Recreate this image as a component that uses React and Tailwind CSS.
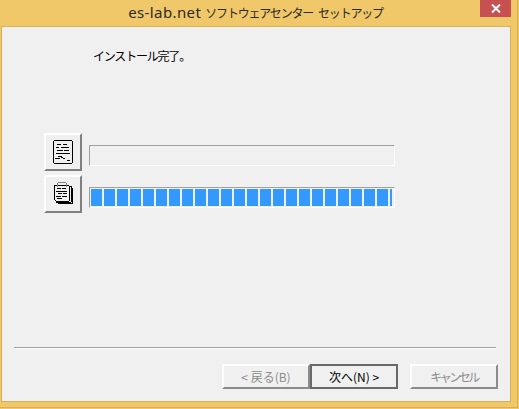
const FONT = { fontFamily: '"Noto Sans CJK JP", "Liberation Sans", sans-serif' };

function DocIcon() {
  return (
    <svg width="20" height="24" viewBox="0 0 20 24" shapeRendering="crispEdges">
      <path d="M1.500.5h17l1 1v21l-1 1h-17l-1-1v-21z" fill="#f0f0f0" stroke="#000" />
      <path d="M4 4.500h4M10 4.500h4M3 7.500h3M8 7.500h8M4 10.500h6M11 10.500h5M3 13.500h14M5 16.500h4M2 18.500h5M8 17.500h2M10 18.500h2M14 20.500h3" stroke="#000" fill="none" />
    </svg>
  );
}

function ClipIcon() {
  return (
    <svg width="21" height="24" viewBox="0 0 21 24" shapeRendering="crispEdges" className="mb-[2px]">
      <path d="M16 5.500h2.500v15M19.500 7v15M3 21.500h15M5 22.500h15" stroke="#000" fill="none" />
      <path d="M1.500 4.500h14l1 1v14l-1 1h-12l-2-2z" fill="#f0f0f0" stroke="#000" />
      <path d="M4.500 6v-3l1-2h7l1 2v3" stroke="#808080" fill="none" />
      <path d="M4 7.500h4M9 7.500h4M3 10.500h11M5 12.500h4M10 12.500h4M3 15.500h5M9 15.500h5M4 17.500h5" stroke="#000" fill="none" />
    </svg>
  );
}

function IconButton({ children }) {
  return (
    <div className="w-[38px] h-[38px] shrink-0 flex items-center justify-center bg-[#f0f0f0] border-2 border-t-[#fff] border-l-[#fff] border-r-[#808080] border-b-[#808080]">
      {children}
    </div>
  );
}

function Progress({ children }) {
  return (
    <div className="mt-[12px] w-[306px] h-[21px] flex gap-[2px] p-[1px] border border-t-[#a0a0a0] border-l-[#a0a0a0] border-r-[#fff] border-b-[#fff] overflow-hidden">
      {children}
    </div>
  );
}

function WinButton({ children, primary, className = "" }) {
  const cls = primary
    ? "border-2 border-[#696969] text-black"
    : "border-2 border-t-[#fff] border-l-[#fff] border-r-[#8c8c8c] border-b-[#8c8c8c] text-[#8c8c8c]";
  return (
    <div className={`w-[88px] h-[25px] flex items-center justify-center text-[12px] leading-none bg-[#f0f0f0] ${cls} ${className}`}>
      {children}
    </div>
  );
}

const SEGMENTS = Array.from({ length: 23 });

export default function App() {
  return (
    <div style={FONT} className="w-[519px] h-[409px] bg-[#f0c769] overflow-hidden">
      <div className="w-[518px] h-[408px] flex flex-col border-r border-b border-[#d8b054]">
        {/* title bar */}
        <div className="h-[26px] shrink-0 flex">
          <div className="flex-1 pl-[31px] flex justify-center items-baseline whitespace-pre pt-[2px] leading-[20px] text-[#2b2b2b]">
            <span className="text-[15px] tracking-[0.4px] mr-[4px]" style={{ fontFamily: '"Noto Sans", sans-serif' }}>es-lab.net</span>
            <span className="text-[12px] tracking-[-1.2px] mr-[5px]">ソフトウェアセンター</span>
            <span className="text-[12px] tracking-[-1.2px]">セットアップ</span>
          </div>
          <div className="w-[31px] h-[17px] mr-[6px] bg-[#c75050] flex items-center justify-center">
            <svg width="10" height="9" viewBox="0 0 10 9">
              <path d="M1 .5l8 8M9 .5l-8 8" stroke="#fff" strokeWidth="2" />
            </svg>
          </div>
        </div>

        {/* client area */}
        <div className="ml-[1px] w-[510px] h-[376px] border border-[#d8b054] bg-[#f0f0f0] flex flex-col">
          <div className="pl-[91px] pt-[20px] text-[12px] leading-[18px] tracking-[-1.2px] text-black">インストール完了。</div>

          <div className="mt-[68px] pl-[42px] flex flex-col gap-[4px]">
            <div className="flex items-start gap-[7px]">
              <IconButton><DocIcon /></IconButton>
              <Progress />
            </div>
            <div className="flex items-start gap-[7px]">
              <IconButton><ClipIcon /></IconButton>
              <Progress>
                {SEGMENTS.map((_, i) => (
                  <div key={i} className="w-[11px] h-full shrink-0 bg-[#3399ff]" />
                ))}
                <div className="w-[2px] h-full shrink-0 bg-[#3399ff]" />
              </Progress>
            </div>
          </div>

          <div className="mt-[134px] ml-[12px] mr-[14px] h-[2px] border-t border-b border-t-[#a0a0a0] border-b-[#fff]" />

          <div className="mt-[15px] pr-[12px] flex justify-end">
            <WinButton>&lt; 戻る(B)</WinButton>
            <WinButton primary>次へ(N) &gt;</WinButton>
            <div className="w-[12px]" />
            <WinButton className="tracking-[-2.5px]">キャンセル</WinButton>
          </div>
        </div>
      </div>
    </div>
  );
}
